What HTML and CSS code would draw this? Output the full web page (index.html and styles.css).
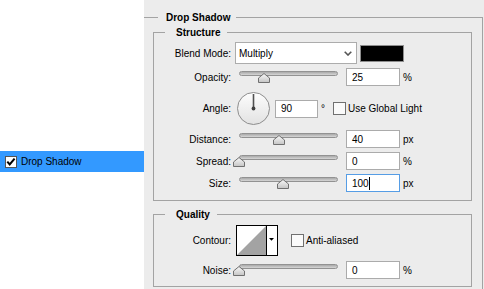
FILE: index.html
```html
<!DOCTYPE html>
<html lang="en">
<head>
<meta charset="utf-8">
<title>Layer Style - Drop Shadow</title>
<link rel="stylesheet" href="styles.css">
</head>
<body>
<svg class="defs" width="0" height="0" aria-hidden="true">
  <defs>
    <linearGradient id="thumbGrad" x1="0" y1="0" x2="0" y2="1">
      <stop offset="0" stop-color="#fafafa"/>
      <stop offset="1" stop-color="#c4c4c4"/>
    </linearGradient>
    <linearGradient id="dialGrad" x1="0" y1="0" x2="0" y2="1">
      <stop offset="0" stop-color="#fdfdfd"/>
      <stop offset="1" stop-color="#e2e2e2"/>
    </linearGradient>
  </defs>
</svg>
<div class="app">
  <aside class="styles-list">
    <div class="style-item selected">
      <svg class="item-check" width="12" height="12" viewBox="0 0 12 12">
        <rect x="0.5" y="0.5" width="11" height="11" fill="#fff" stroke="#555"/>
        <path d="M2.3 5.6L4.7 8.4L9.6 2.6" fill="none" stroke="#000" stroke-width="2"/>
      </svg>
      <span>Drop Shadow</span>
    </div>
  </aside>

  <main class="panel">
    <fieldset class="group group-main">
      <legend>Drop Shadow</legend>

      <fieldset class="group group-sub structure">
        <legend>Structure</legend>

        <div class="row row-blend">
          <span class="label">Blend Mode:</span>
          <div class="select">
            <span>Multiply</span>
            <svg width="8" height="5" viewBox="0 0 8 5"><path d="M0.7 0.7L4 4L7.3 0.7" fill="none" stroke="#555" stroke-width="1.6"/></svg>
          </div>
          <div class="swatch"></div>
        </div>

        <div class="row row-slider row-opacity">
          <span class="label">Opacity:</span>
          <div class="slider">
            <div class="track"></div>
            <svg class="thumb" style="left:25%" width="12" height="10" viewBox="0 0 12 10"><path d="M0.5 9.5V5L6 0.5L11.5 5V9.5Z" fill="url(#thumbGrad)" stroke="#707070"/></svg>
          </div>
          <div class="field">25</div>
          <span class="unit">%</span>
        </div>

        <div class="row row-angle">
          <span class="label">Angle:</span>
          <svg class="dial" width="33" height="33" viewBox="0 0 33 33">
            <circle cx="16.5" cy="16.5" r="16" fill="url(#dialGrad)" stroke="#8d8d8d"/>
            <line x1="16.5" y1="16.5" x2="16.5" y2="2" stroke="#505050" stroke-width="1.6"/>
            <circle cx="16.5" cy="16.5" r="1.9" fill="#404040"/>
          </svg>
          <div class="field field-short">90</div>
          <span class="degree">°</span>
          <span class="checkbox"></span>
          <span class="check-label">Use Global Light</span>
        </div>

        <div class="row row-slider row-distance">
          <span class="label">Distance:</span>
          <div class="slider">
            <div class="track"></div>
            <svg class="thumb" style="left:40%" width="12" height="10" viewBox="0 0 12 10"><path d="M0.5 9.5V5L6 0.5L11.5 5V9.5Z" fill="url(#thumbGrad)" stroke="#707070"/></svg>
          </div>
          <div class="field">40</div>
          <span class="unit">px</span>
        </div>

        <div class="row row-slider row-spread">
          <span class="label">Spread:</span>
          <div class="slider">
            <div class="track"></div>
            <svg class="thumb" style="left:0%" width="12" height="10" viewBox="0 0 12 10"><path d="M0.5 9.5V5L6 0.5L11.5 5V9.5Z" fill="url(#thumbGrad)" stroke="#707070"/></svg>
          </div>
          <div class="field">0</div>
          <span class="unit">%</span>
        </div>

        <div class="row row-slider row-size">
          <span class="label">Size:</span>
          <div class="slider">
            <div class="track"></div>
            <svg class="thumb" style="left:44%" width="12" height="10" viewBox="0 0 12 10"><path d="M0.5 9.5V5L6 0.5L11.5 5V9.5Z" fill="url(#thumbGrad)" stroke="#707070"/></svg>
          </div>
          <div class="field field-focus">100<span class="caret"></span></div>
          <span class="unit">px</span>
        </div>
      </fieldset>

      <fieldset class="group group-sub quality">
        <legend>Quality</legend>

        <div class="row row-contour">
          <span class="label">Contour:</span>
          <svg class="contour" width="42" height="31" viewBox="0 0 42 31">
            <rect x="0.5" y="0.5" width="41" height="30" fill="#fff" stroke="#000"/>
            <path d="M1 30L30 1V30Z" fill="#a3a3a3"/>
            <line x1="30.5" y1="0" x2="30.5" y2="31" stroke="#000"/>
            <path d="M33 13H38L35.5 15.8Z" fill="#000"/>
          </svg>
          <span class="checkbox checkbox-aa"></span>
          <span class="check-label">Anti-aliased</span>
        </div>

        <div class="row row-slider row-noise">
          <span class="label">Noise:</span>
          <div class="slider">
            <div class="track"></div>
            <svg class="thumb" style="left:0%" width="12" height="10" viewBox="0 0 12 10"><path d="M0.5 9.5V5L6 0.5L11.5 5V9.5Z" fill="url(#thumbGrad)" stroke="#707070"/></svg>
          </div>
          <div class="field">0</div>
          <span class="unit">%</span>
        </div>
      </fieldset>
    </fieldset>
  </main>
</div>
</body>
</html>
```

FILE: styles.css
```css
html, body {
  margin: 0;
  padding: 0;
}

body {
  font-family: "Liberation Sans", Arial, sans-serif;
  font-size: 10px;
  line-height: 13px;
  color: #000;
  overflow: hidden;
}

.defs {
  position: absolute;
  width: 0;
  height: 0;
}

.app {
  display: flex;
  width: 484px;
  height: 289px;
  overflow: hidden;
}

/* left list */
.styles-list {
  width: 144px;
  flex: none;
  background: #fff;
  padding-top: 151px;
  box-sizing: border-box;
}

.style-item {
  height: 21px;
  display: flex;
  align-items: center;
  gap: 4px;
  padding-left: 5px;
}

.style-item.selected {
  background: #3399ff;
}

.item-check {
  flex: none;
  display: block;
}

/* right panel */
.panel {
  flex: 1;
  background: #ececec;
  padding-right: 1px;
  overflow: hidden;
}

.group {
  margin: 0;
  padding: 0;
  border: 1px solid #a3a3a3;
  min-width: 0;
}

.group > legend {
  font-weight: bold;
  line-height: 13px;
  padding: 0;
}

.group-main {
  margin-top: 11px;
  border-left: none;
  padding-bottom: 20px;
}

.group-main > legend {
  margin-left: 14px;
  padding: 0 6px 0 8px;
}

.group-sub {
  margin: 2px 10px 0 9px;
}

.group-sub > legend {
  margin-left: 11px;
  padding: 0 7px 0 11px;
}

.structure {
  padding-bottom: 8px;
}

.quality {
  margin-top: 7px;
  padding-bottom: 7px;
}

/* rows */
.row {
  display: flex;
  align-items: center;
}

.label {
  width: 77px;
  flex: none;
  text-align: right;
  margin-right: 4px;
}

.row-blend {
  margin-top: 3px;
  height: 22px;
}

.row-slider {
  height: 18px;
}

.row-opacity { margin-top: 4px; }
.row-angle { margin-top: 6px; height: 33px; }
.row-distance { margin-top: 5px; }
.row-spread { margin-top: 4px; }
.row-size { margin-top: 4px; }

.row-contour {
  margin-top: 4px;
  height: 31px;
}

.row-noise { margin-top: 5px; }

/* select + swatch */
.select {
  width: 122px;
  height: 22px;
  flex: none;
  box-sizing: border-box;
  border: 1px solid #acacac;
  background: #fff;
  padding: 0 4px 0 3px;
  display: flex;
  align-items: center;
  justify-content: space-between;
}

.select svg {
  display: block;
}

.swatch {
  width: 44px;
  height: 17px;
  flex: none;
  box-sizing: border-box;
  margin-left: 3px;
  border: 1px solid #8e8e8e;
  background: #000;
}

/* slider */
.slider {
  position: relative;
  width: 99px;
  height: 18px;
  flex: none;
  margin: 0 8px 0 4px;
}

.track {
  margin-top: 3px;
  height: 5px;
  box-sizing: border-box;
  border: 1px solid #929292;
  border-radius: 3px;
  background: linear-gradient(#a9a9a9, #d6d6d6);
}

.thumb {
  position: absolute;
  top: 5px;
  margin-left: -6px;
  display: block;
}

/* text fields */
.field {
  width: 54px;
  height: 18px;
  flex: none;
  box-sizing: border-box;
  border: 1px solid #ababab;
  background: #fff;
  padding: 0 5px;
  display: flex;
  align-items: center;
}

.field-short {
  width: 43px;
  margin-left: 5px;
}

.field-focus {
  border-color: #569de5;
}

.caret {
  width: 1px;
  height: 13px;
  background: #000;
}

.unit {
  margin-left: 3px;
}

/* angle */
.dial {
  display: block;
  flex: none;
  margin-left: 2px;
}

.degree {
  margin-left: 3px;
}

.checkbox {
  width: 13px;
  height: 13px;
  flex: none;
  box-sizing: border-box;
  border: 1px solid #707070;
  background: #fafafa;
  margin-left: 8px;
}

.check-label {
  margin-left: 2px;
}

/* contour */
.contour {
  display: block;
  flex: none;
  margin-left: 1px;
}

.checkbox-aa {
  margin-left: 13px;
}
```
